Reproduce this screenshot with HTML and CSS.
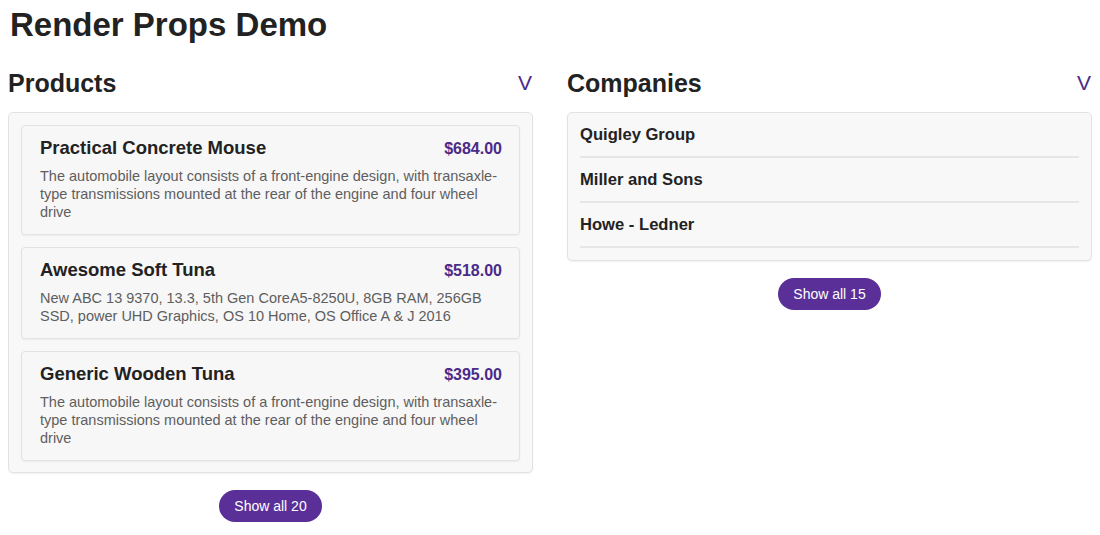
FILE: index.html
```html
<!DOCTYPE html>
<html lang="en">
<head>
<meta charset="utf-8">
<title>Render Props Demo</title>
<link rel="stylesheet" href="styles.css">
</head>
<body>
<h1 class="page-title">Render Props Demo</h1>
<div class="columns">
  <section class="panel">
    <div class="panel-head">
      <h2 class="panel-title">Products</h2>
      <span class="toggle">V</span>
    </div>
    <div class="box">
      <div class="card">
        <div class="card-head">
          <span class="card-title">Practical Concrete Mouse</span>
          <span class="price">$684.00</span>
        </div>
        <p class="desc">The automobile layout consists of a front-engine design, with transaxle-type transmissions mounted at the rear of the engine and four wheel drive</p>
      </div>
      <div class="card">
        <div class="card-head">
          <span class="card-title">Awesome Soft Tuna</span>
          <span class="price">$518.00</span>
        </div>
        <p class="desc">New ABC 13 9370, 13.3, 5th Gen CoreA5-8250U, 8GB RAM, 256GB SSD, power UHD Graphics, OS 10 Home, OS Office A &amp; J 2016</p>
      </div>
      <div class="card">
        <div class="card-head">
          <span class="card-title">Generic Wooden Tuna</span>
          <span class="price">$395.00</span>
        </div>
        <p class="desc">The automobile layout consists of a front-engine design, with transaxle-type transmissions mounted at the rear of the engine and four wheel drive</p>
      </div>
    </div>
    <div class="more"><button class="btn">Show all 20</button></div>
  </section>
  <section class="panel">
    <div class="panel-head">
      <h2 class="panel-title">Companies</h2>
      <span class="toggle">V</span>
    </div>
    <div class="box box-list">
      <div class="item">Quigley Group</div>
      <div class="item">Miller and Sons</div>
      <div class="item">Howe - Ledner</div>
    </div>
    <div class="more"><button class="btn">Show all 15</button></div>
  </section>
</div>
</body>
</html>
```
FILE: styles.css
```css
html, body {
  background: #ffffff;
}
body {
  margin: 8px;
  font-family: "Liberation Sans", Arial, sans-serif;
  color: #222222;
}
.page-title {
  margin: 0;
  padding-left: 2px;
  font-size: 33px;
  line-height: 34px;
  font-weight: bold;
  color: #222222;
}
.columns {
  display: grid;
  grid-template-columns: 1fr 1fr;
  column-gap: 34px;
  margin-top: 24px;
}
.panel-head {
  display: flex;
  justify-content: space-between;
  align-items: center;
  height: 34px;
  margin-bottom: 12px;
}
.panel-title {
  margin: 0;
  font-size: 25px;
  font-weight: bold;
  color: #222222;
}
.toggle {
  font-size: 21px;
  color: #4a2a8a;
  padding-right: 1px;
}
.box {
  background: #f8f8f8;
  border: 1px solid #e2e2e2;
  border-radius: 5px;
  box-shadow: 0 1px 2px rgba(0,0,0,0.06);
  padding: 12px 12px 11px 12px;
  display: flex;
  flex-direction: column;
  gap: 12px;
}
.card {
  background: #f7f7f7;
  border: 1px solid #e3e3e3;
  border-radius: 4px;
  box-shadow: 0 1px 2px rgba(0,0,0,0.05);
  padding: 10px 17px 13px 18px;
}
.card-head {
  display: flex;
  justify-content: space-between;
  align-items: baseline;
}
.card-title {
  font-size: 18.5px;
  font-weight: bold;
  color: #222222;
  line-height: 24px;
}
.price {
  font-size: 16px;
  font-weight: bold;
  color: #4b2a88;
}
.desc {
  margin: 7px 0 0 0;
  font-size: 14.5px;
  line-height: 18px;
  color: #5e5e5e;
}
.box-list {
  gap: 0;
  padding: 0 12px 12px 12px;
}
.item {
  font-size: 16.6px;
  font-weight: bold;
  color: #222222;
  line-height: 20px;
  padding: 12px 0 11px 0;
  border-bottom: 2px solid #e6e6e6;
}
.more {
  display: flex;
  justify-content: center;
  margin-top: 17px;
}
.btn {
  background: #5a2f98;
  color: #ffffff;
  border: none;
  border-radius: 16px;
  height: 32px;
  padding: 0 15.5px;
  font-family: "Liberation Sans", Arial, sans-serif;
  font-size: 14px;
}
```
